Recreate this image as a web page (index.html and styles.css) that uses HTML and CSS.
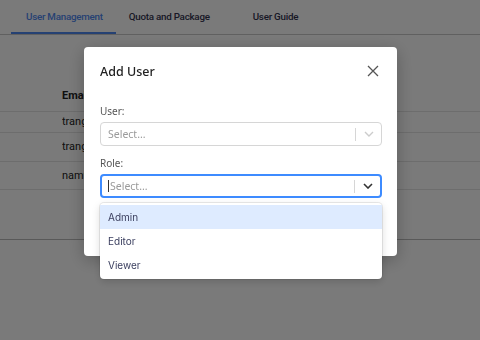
FILE: index.html
```html
<!DOCTYPE html>
<html lang="en">
<head>
    <meta charset="UTF-8">
    <title>User Management</title>
    <link rel="stylesheet" href="styles.css">
</head>
<body>
    <div class="page">
        <nav class="tabs">
            <a class="tab tab-active">User Management</a>
            <a class="tab">Quota and Package</a>
            <a class="tab tab-guide">User Guide</a>
        </nav>
        <table class="users">
            <tr class="row-head"><th></th><th><div class="cell">Email</div></th></tr>
            <tr class="row-1"><td></td><td><div class="cell">trangnt@example.com</div></td></tr>
            <tr class="row-2"><td></td><td><div class="cell">trangpt@example.com</div></td></tr>
            <tr class="row-3"><td></td><td><div class="cell">namvh@example.com</div></td></tr>
        </table>
        <div class="table-foot"></div>
    </div>

    <div class="overlay">
        <div class="modal">
            <div class="modal-header">
                <h2>Add User</h2>
                <svg class="close" width="12" height="12" viewBox="0 0 12 12">
                    <path d="M1 1L11 11M11 1L1 11" stroke="#555" stroke-width="1.3" fill="none"/>
                </svg>
            </div>
            <label class="field-label">User:</label>
            <div class="select">
                <span class="placeholder">Select...</span>
                <span class="sep"></span>
                <svg class="chevron" width="10" height="6" viewBox="0 0 10 6">
                    <path d="M1 1L5 5L9 1" stroke="#ccc" stroke-width="1.4" fill="none"/>
                </svg>
            </div>
            <label class="field-label">Role:</label>
            <div class="select select-focus">
                <span class="caret"></span>
                <span class="placeholder">Select...</span>
                <span class="sep"></span>
                <svg class="chevron" width="10" height="6" viewBox="0 0 10 6">
                    <path d="M1 1L5 5L9 1" stroke="#333" stroke-width="1.6" fill="none"/>
                </svg>
            </div>
            <ul class="menu">
                <li class="option option-hover">Admin</li>
                <li class="option">Editor</li>
                <li class="option">Viewer</li>
            </ul>
        </div>
    </div>
</body>
</html>
```

FILE: styles.css
```css
* {
    margin: 0;
    padding: 0;
    box-sizing: border-box;
}
body {
    width: 480px;
    height: 340px;
    overflow: hidden;
    font-family: "Noto Sans", "Open Sans", sans-serif;
    background: #fff;
}
.page {
    height: 340px;
}
.tabs {
    display: flex;
    height: 35px;
    padding-left: 11px;
    border-bottom: 1px solid #c8c8c8;
}
.tab {
    font-family: Roboto, "Noto Sans", sans-serif;
    font-size: 9.8px;
    font-weight: 500;
    letter-spacing: -0.25px;
    color: #343450;
    padding: 11px 13px 0;
    white-space: nowrap;
}
.tab-active {
    color: #4f88f0;
    padding: 11px 13px 0 15px;
    border-bottom: 2px solid #4f88f0;
}
.tab-guide {
    margin-left: 17px;
}
.users {
    border-collapse: collapse;
    width: 100%;
    margin-top: 54px;
    font-family: Roboto, "Noto Sans", sans-serif;
    font-size: 11px;
    color: #222;
}
.users th,
.users td {
    text-align: left;
    border-bottom: 1px solid #e4e4e4;
    padding: 0;
}
.users th:first-child,
.users td:first-child {
    width: 62px;
}
.cell {
    width: 22px;
    overflow: hidden;
    white-space: nowrap;
}
.row-head {
    height: 22px;
}
.row-head th {
    font-weight: 700;
    vertical-align: top;
}
.row-1 { height: 21px; }
.row-2 { height: 29px; }
.row-3 { height: 28px; }
.table-foot {
    height: 50px;
    border-bottom: 1px solid #bbb;
}
.overlay {
    position: fixed;
    inset: 0;
    background: rgba(0, 0, 0, 0.52);
}
.modal {
    position: absolute;
    left: 84px;
    top: 47px;
    width: 313px;
    height: 209px;
    background: #fff;
    border-radius: 4px;
    padding: 0 16px;
    box-shadow: 0 4px 18px rgba(0, 0, 0, 0.25);
}
.modal-header {
    display: flex;
    justify-content: space-between;
    align-items: center;
    height: 48px;
}
.modal-header h2 {
    font-size: 12.5px;
    font-weight: 500;
    color: #222;
}
.close {
    margin-right: 2px;
}
.field-label {
    display: block;
    font-size: 10px;
    line-height: 16px;
    color: #555;
    margin: 8px 0 3px;
}
.select + .field-label {
    margin-top: 9px;
}
.select {
    display: flex;
    align-items: center;
    width: 282px;
    height: 24px;
    border: 1px solid #d6d6d6;
    border-radius: 4px;
    padding-left: 7px;
}
.select-focus {
    border: 2px solid #3d8bff;
    padding-left: 6px;
}
.placeholder {
    flex: 1;
    font-size: 10.5px;
    color: #9a9a9a;
}
.caret {
    width: 1px;
    height: 12px;
    background: #333;
    margin-right: 1px;
}
.sep {
    width: 1px;
    height: 13px;
    background: #d6d6d6;
}
.chevron {
    margin: 0 7px 0 8px;
}
.menu {
    list-style: none;
    width: 282px;
    margin-top: 5px;
    padding: 2px 0;
    background: #fff;
    border-radius: 4px;
    box-shadow: 0 0 0 1px rgba(0, 0, 0, 0.08), 0 3px 8px rgba(0, 0, 0, 0.15);
    position: relative;
}
.option {
    height: 24px;
    line-height: 24px;
    padding-left: 8px;
    font-family: Inter, "Noto Sans", sans-serif;
    font-size: 10px;
    color: #3c4060;
}
.option-hover {
    background: #deebff;
}
```
